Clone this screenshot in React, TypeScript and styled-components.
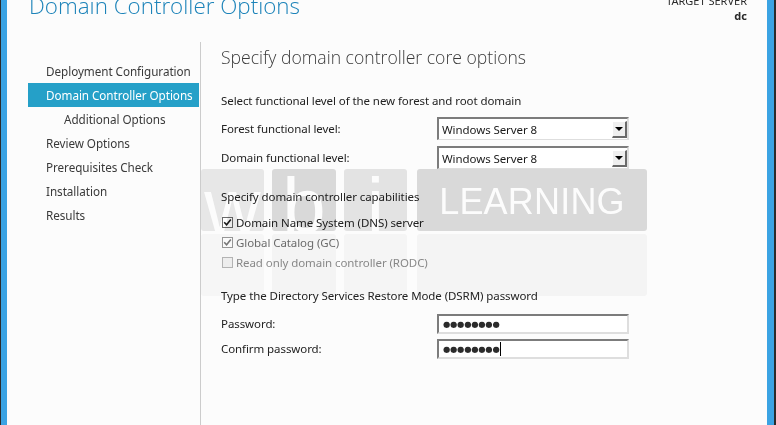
import React from "react";
import styled, { createGlobalStyle } from "styled-components";

const Global = createGlobalStyle`
  html, body { margin: 0; padding: 0; background: #fcfcfc; overflow: hidden; }
  body { font-family: "Segoe UI", "Noto Sans", "Open Sans", sans-serif; }
  * { box-sizing: border-box; }
`;

const Window = styled.div`
  position: relative;
  display: flex;
  width: 776px;
  height: 425px;
  background: #fcfcfc;
  overflow: hidden;
`;

const LeftEdge = styled.div`
  flex: none;
  width: 7px;
  background: #3ba3e3;
  border-left: 1px solid #2b2b2b;
`;

const RightEdge = styled.div`
  flex: none;
  width: 9px;
  background: #3ba3e3;
  border-right: 2px solid #2b2b2b;
`;

const Main = styled.div`
  flex: 1;
  min-width: 0;
  display: flex;
  flex-direction: column;
`;

const Header = styled.div`
  flex: none;
  height: 42px;
  display: flex;
  justify-content: space-between;
  align-items: flex-start;
  padding: 0 20px 0 22px;
`;

const Title = styled.h1`
  margin: -9px 0 0;
  font-family: "Segoe UI Light", "Open Sans", sans-serif;
  font-weight: 300;
  font-size: 22.4px;
  line-height: 30px;
  color: #1c83b9;
  white-space: nowrap;
`;

const TargetServer = styled.div`
  margin-top: -7px;
  text-align: right;
  font-size: 11px;
  line-height: 15px;
  color: #2a2a2a;
`;

const ServerName = styled.div`
  font-weight: 700;
`;

const Body = styled.div`
  flex: 1;
  display: flex;
  min-height: 0;
`;

const Nav = styled.nav`
  flex: none;
  width: 194px;
  padding: 17px 1px 0 21px;
  border-right: 1px solid #cccccc;
  display: flex;
  flex-direction: column;
`;

const NavItem = styled.div<{ $active?: boolean; $indent?: number }>`
  height: 24px;
  line-height: 25px;
  padding-left: ${(p) => p.$indent ?? 18}px;
  font-size: 11.7px;
  letter-spacing: -0.05px;
  white-space: nowrap;
  color: ${(p) => (p.$active ? "#ffffff" : "#3a3a3a")};
  background: ${(p) => (p.$active ? "#25a0c8" : "transparent")};
`;

const Content = styled.div`
  flex: 1;
  min-width: 0;
  padding-left: 20px;
  display: flex;
  flex-direction: column;
  color: #222222;
  font-size: 11.5px;
  letter-spacing: -0.08px;
`;

const Subtitle = styled.h2`
  margin: 0;
  height: 30px;
  line-height: 30px;
  font-family: "Segoe UI Light", "Open Sans", sans-serif;
  font-weight: 300;
  font-size: 17.6px;
  letter-spacing: 0;
  color: #3a3a3a;
  white-space: nowrap;
`;

const SectionLabel = styled.div<{ $mt: number }>`
  margin-top: ${(p) => p.$mt}px;
  height: 16px;
  line-height: 16px;
  white-space: nowrap;
`;

const FieldRow = styled.div<{ $mt: number; $h: number }>`
  margin-top: ${(p) => p.$mt}px;
  height: ${(p) => p.$h}px;
  display: grid;
  grid-template-columns: 216px 192px;
  align-items: center;
`;

const FieldLabel = styled.label`
  white-space: nowrap;
  line-height: 16px;
`;

const Select = styled.div`
  position: relative;
  height: 100%;
  display: flex;
  align-items: center;
  background: #ffffff;
  border-top: 2px solid #7c7c7c;
  border-left: 2px solid #7c7c7c;
  border-bottom: 1px solid #dedede;
  border-right: 2px solid #dedede;
  padding-left: 3px;
  color: #1a1a1a;
`;

const SelectValue = styled.span`
  flex: 1;
  white-space: nowrap;
`;

const ArrowButton = styled.span`
  flex: none;
  width: 15px;
  height: 17px;
  display: flex;
  align-items: center;
  justify-content: center;
  background: #efefef;
  border-top: 1px solid #ffffff;
  border-left: 1px solid #ffffff;
  border-right: 2px solid #6a6a6a;
  border-bottom: 2px solid #6a6a6a;
`;

const Arrow = styled.span`
  width: 0;
  height: 0;
  border-left: 4px solid transparent;
  border-right: 4px solid transparent;
  border-top: 4px solid #000000;
`;

const CheckList = styled.div`
  margin-top: 7px;
  display: flex;
  flex-direction: column;
`;

type Tone = "on" | "dim" | "off";

const CheckRow = styled.div<{ $tone: Tone }>`
  height: 20px;
  display: flex;
  align-items: center;
  padding-left: 1px;
  gap: 3px;
  white-space: nowrap;
  color: ${(p) => (p.$tone === "on" ? "#222222" : p.$tone === "dim" ? "#6e6e6e" : "#8c8c8c")};
`;

const Box = styled.span<{ $tone: Tone }>`
  flex: none;
  width: 11px;
  height: 11px;
  display: flex;
  align-items: center;
  justify-content: center;
  background: ${(p) => (p.$tone === "off" ? "#f3f3f3" : "#ffffff")};
  border: 1px solid
    ${(p) => (p.$tone === "on" ? "#6b6b6b" : p.$tone === "dim" ? "#9a9a9a" : "#b8b8b8")};
`;

const PasswordBox = styled.div`
  position: relative;
  height: 100%;
  display: flex;
  align-items: center;
  background: #ffffff;
  border-top: 2px solid #7c7c7c;
  border-left: 2px solid #7c7c7c;
  border-bottom: 2px solid #dedede;
  border-right: 2px solid #dedede;
  padding-left: 4px;
`;

const Dots = styled.span`
  font-family: "DejaVu Sans", sans-serif;
  font-size: 8.4px;
  letter-spacing: -0.25px;
  color: #2b2b2b;
  line-height: 10px;
`;

const Caret = styled.span`
  width: 1px;
  height: 14px;
  background: #000000;
  margin-left: 1px;
`;

const Watermark = styled.div`
  position: absolute;
  left: 201px;
  top: 169px;
  display: flex;
  flex-direction: column;
  gap: 3px;
  pointer-events: none;
  mix-blend-mode: multiply;
`;

const WmRow = styled.div`
  display: flex;
  gap: 8px;
`;

const WmTile = styled.div<{ $w: number; $bg: string; $h: number; $ml?: number }>`
  width: ${(p) => p.$w}px;
  height: ${(p) => p.$h}px;
  margin-left: ${(p) => p.$ml ?? 0}px;
  background: ${(p) => p.$bg};
  border-radius: 3px;
  overflow: hidden;
  display: flex;
  align-items: flex-end;
  justify-content: center;
  font-family: "Liberation Sans", Arial, sans-serif;
  color: #ffffff;
`;

const WmLetter = styled.span`
  font-size: 78px;
  line-height: 78px;
  margin-bottom: -14px;
  color: #ffffff;
`;

const WmWord = styled.span`
  align-self: center;
  font-size: 36px;
  letter-spacing: 0.2px;
  line-height: 40px;
  margin-top: 4px;
`;

const Check = ({ color }: { color: string }) => (
  <svg width="9" height="9" viewBox="0 0 9 9">
    <path d="M1.2 4.2 L3.6 6.8 L7.8 1.6" fill="none" stroke={color} strokeWidth="1.6" />
  </svg>
);

export default function App() {
  const nav = [
    { label: "Deployment Configuration" },
    { label: "Domain Controller Options", active: true },
    { label: "Additional Options", indent: 36 },
    { label: "Review Options" },
    { label: "Prerequisites Check" },
    { label: "Installation" },
    { label: "Results" },
  ];
  return (
    <>
      <Global />
      <Window>
        <LeftEdge />
        <Main>
          <Header>
            <Title>Domain Controller Options</Title>
            <TargetServer>
              <div>TARGET SERVER</div>
              <ServerName>dc</ServerName>
            </TargetServer>
          </Header>
          <Body>
            <Nav>
              {nav.map((n) => (
                <NavItem key={n.label} $active={n.active} $indent={n.indent}>
                  {n.label}
                </NavItem>
              ))}
            </Nav>
            <Content>
              <Subtitle>Specify domain controller core options</Subtitle>
              <SectionLabel $mt={21}>Select functional level of the new forest and root domain</SectionLabel>
              <FieldRow $mt={8} $h={23}>
                <FieldLabel>Forest functional level:</FieldLabel>
                <Select>
                  <SelectValue>Windows Server 8</SelectValue>
                  <ArrowButton>
                    <Arrow />
                  </ArrowButton>
                </Select>
              </FieldRow>
              <FieldRow $mt={6} $h={23}>
                <FieldLabel>Domain functional level:</FieldLabel>
                <Select>
                  <SelectValue>Windows Server 8</SelectValue>
                  <ArrowButton>
                    <Arrow />
                  </ArrowButton>
                </Select>
              </FieldRow>
              <SectionLabel $mt={20}>Specify domain controller capabilities</SectionLabel>
              <CheckList>
                <CheckRow $tone="on">
                  <Box $tone="on">
                    <Check color="#1a1a1a" />
                  </Box>
                  Domain Name System (DNS) server
                </CheckRow>
                <CheckRow $tone="dim">
                  <Box $tone="dim">
                    <Check color="#7a7a7a" />
                  </Box>
                  Global Catalog (GC)
                </CheckRow>
                <CheckRow $tone="off">
                  <Box $tone="off" />
                  Read only domain controller (RODC)
                </CheckRow>
              </CheckList>
              <SectionLabel $mt={16}>Type the Directory Services Restore Mode (DSRM) password</SectionLabel>
              <FieldRow $mt={10} $h={20}>
                <FieldLabel>Password:</FieldLabel>
                <PasswordBox>
                  <Dots>●●●●●●●●</Dots>
                </PasswordBox>
              </FieldRow>
              <FieldRow $mt={5} $h={20}>
                <FieldLabel>Confirm password:</FieldLabel>
                <PasswordBox>
                  <Dots>●●●●●●●●</Dots>
                  <Caret />
                </PasswordBox>
              </FieldRow>
            </Content>
          </Body>
        </Main>
        <RightEdge />
        <Watermark aria-hidden>
          <WmRow>
            <WmTile $w={63} $h={62} $bg="#eaeaea">
              <WmLetter>w</WmLetter>
            </WmTile>
            <WmTile $w={64} $h={62} $bg="#dcdcdc">
              <WmLetter>b</WmLetter>
            </WmTile>
            <WmTile $w={63} $h={62} $bg="#e6e6e6">
              <WmLetter>i</WmLetter>
            </WmTile>
            <WmTile $w={230} $h={62} $bg="#dcdcdc" $ml={2}>
              <WmWord>LEARNING</WmWord>
            </WmTile>
          </WmRow>
          <WmRow>
            <WmTile $w={63} $h={62} $bg="#f9f9f9" />
            <WmTile $w={64} $h={62} $bg="#f7f7f7" />
            <WmTile $w={63} $h={62} $bg="#f8f8f8" />
            <WmTile $w={230} $h={62} $bg="#f7f7f7" $ml={2} />
          </WmRow>
        </Watermark>
      </Window>
    </>
  );
}
